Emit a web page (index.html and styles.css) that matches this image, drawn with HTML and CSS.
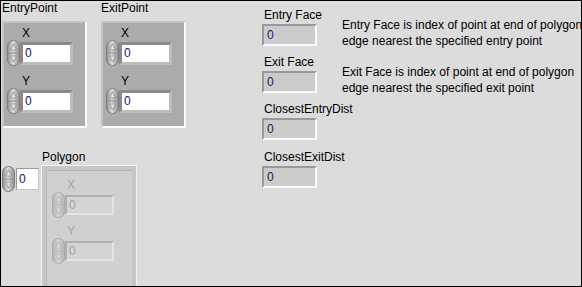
FILE: index.html
```html
<!DOCTYPE html>
<html>
<head>
<meta charset="utf-8">
<link rel="stylesheet" href="styles.css">
</head>
<body>
<svg width="0" height="0" class="defs">
  <defs>
    <linearGradient id="sg" x1="0" y1="0" x2="1" y2="0">
      <stop offset="0" stop-color="#8c8c8c"/>
      <stop offset="0.45" stop-color="#dedede"/>
      <stop offset="1" stop-color="#8c8c8c"/>
    </linearGradient>
    <symbol id="spin" viewBox="0 0 13 26">
      <rect x="0.5" y="0.5" width="12" height="25" rx="6" fill="url(#sg)" stroke="#7c7c7c"/>
      <line x1="2" y1="13" x2="11" y2="13" stroke="#8a8a8a"/>
      <path d="M6.5 4 L9.5 10 L3.5 10 Z" fill="#e4e4e4" stroke="#8c8c8c" stroke-width="0.8"/>
      <path d="M6.5 22 L9.5 16 L3.5 16 Z" fill="#e4e4e4" stroke="#8c8c8c" stroke-width="0.8"/>
    </symbol>
  </defs>
</svg>
<div class="panel">
  <div class="left">
    <div class="clusters">
      <div class="cluster">
        <div class="lbl">EntryPoint</div>
        <div class="cbox">
          <div class="sub">X</div>
          <div class="num"><svg class="spin"><use href="#spin"/></svg><div class="inp">0</div></div>
          <div class="sub sub2">Y</div>
          <div class="num"><svg class="spin"><use href="#spin"/></svg><div class="inp">0</div></div>
        </div>
      </div>
      <div class="cluster">
        <div class="lbl">ExitPoint</div>
        <div class="cbox">
          <div class="sub">X</div>
          <div class="num"><svg class="spin"><use href="#spin"/></svg><div class="inp">0</div></div>
          <div class="sub sub2">Y</div>
          <div class="num"><svg class="spin"><use href="#spin"/></svg><div class="inp">0</div></div>
        </div>
      </div>
    </div>
    <div class="array">
      <div class="index"><svg class="spin"><use href="#spin"/></svg><div class="idx">0</div></div>
      <div class="arrcol">
        <div class="lbl">Polygon</div>
        <div class="frame">
          <div class="dis">
            <div class="sub">X</div>
            <div class="num"><svg class="spin"><use href="#spin"/></svg><div class="inp">0</div></div>
            <div class="sub sub2">Y</div>
            <div class="num"><svg class="spin"><use href="#spin"/></svg><div class="inp">0</div></div>
          </div>
        </div>
      </div>
    </div>
  </div>
  <div class="right">
    <div class="row">
      <div class="ind"><div class="lbl">Entry Face</div><div class="ibox">0</div></div>
      <div class="desc">Entry Face is index of point at end of polygon<br>edge nearest the specified entry point</div>
    </div>
    <div class="row">
      <div class="ind"><div class="lbl">Exit Face</div><div class="ibox">0</div></div>
      <div class="desc">Exit Face is index of point at end of polygon<br>edge nearest the specified exit point</div>
    </div>
    <div class="row">
      <div class="ind"><div class="lbl">ClosestEntryDist</div><div class="ibox">0</div></div>
    </div>
    <div class="row">
      <div class="ind"><div class="lbl">ClosestExitDist</div><div class="ibox">0</div></div>
    </div>
  </div>
</div>
</body>
</html>
```
FILE: styles.css
```css
html, body { margin: 0; padding: 0; }
body { font-family: "Liberation Sans", Arial, sans-serif; font-size: 12px; color: #000; }
.defs { position: absolute; }
.panel {
  width: 582px; height: 287px; box-sizing: border-box;
  border: 1px solid #000; background: #dcdcdc;
  display: flex; overflow: hidden; padding-left: 1px;
}
.left { width: 259px; flex: none; display: flex; flex-direction: column; }
.lbl { line-height: 14px; height: 14px; white-space: nowrap; }
.clusters { display: flex; gap: 14px; }
.cluster { display: flex; flex-direction: column; }
.cbox {
  margin-top: 6px; width: 78px; height: 100px;
  background: #ababab;
  border-top: 2px solid #c4c4c4; border-left: 2px solid #c4c4c4;
  border-right: 2px solid #fbfbfb; border-bottom: 2px solid #fbfbfb;
  padding: 3px 0 0 3px; box-sizing: content-box;
}
.sub { line-height: 14px; height: 14px; padding-left: 15px; color: #000; }
.sub2 { margin-top: 8px; }
.num { display: flex; align-items: center; height: 26px; }
.spin { width: 13px; height: 26px; flex: none; }
.inp {
  width: 45px; height: 17px; box-sizing: content-box;
  border-top: 3px solid #8a8a8a; border-left: 3px solid #8a8a8a;
  border-right: 3px solid #bdbdbd; border-bottom: 3px solid #bdbdbd;
  background: #fff; color: #10206a; line-height: 17px; padding-left: 2px;
}
.array { display: flex; margin-top: 22px; }
.index { display: flex; align-items: center; margin-top: 16px; height: 26px; width: 40px; }
.idx {
  width: 19px; height: 20px; background: #fff; border: 1px solid #c8c8c8;
  border-top-color: #9a9a9a; border-left-color: #9a9a9a;
  line-height: 20px; padding-left: 2px; color: #10206a; margin-left: 1px;
}
.arrcol { display: flex; flex-direction: column; }
.frame {
  margin-top: 2px; width: 80px; height: 130px;
  border: 4px solid #c6c6c6; outline: 1px solid #f2f2f2;
  background: #d0d0d0; padding: 8px 0 0 6px; box-sizing: content-box;
  box-shadow: inset 1px 1px 0 #b4b4b4;
}
.dis { color: #a4a4a4; }
.dis .sub { color: #a4a4a4; padding-left: 15px; }
.dis .spin { opacity: 0.45; }
.dis .inp {
  width: 43px; height: 16px; background: #d4d4d4; color: #a0a0a0;
  border-top: 2px solid #b0b0b0; border-left: 2px solid #b0b0b0;
  border-right: 2px solid #e4e4e4; border-bottom: 2px solid #e4e4e4;
  line-height: 16px;
}
.dis .sub2 { margin-top: 6px; }
.right { display: flex; flex-direction: column; padding-top: 7px; margin-left: 1px; }
.row { display: flex; height: 38px; margin-bottom: 9px; }
.row:nth-child(3) { margin-bottom: 10px; }
.ind { width: 80px; flex: none; display: flex; flex-direction: column; }
.ind .lbl { padding-left: 2px; }
.ibox {
  margin-top: 2px; width: 48px; height: 18px; box-sizing: content-box;
  background: #cbcbcb; color: #10206a;
  border-top: 2px solid #999; border-left: 2px solid #999;
  border-right: 2px solid #fafafa; border-bottom: 2px solid #fafafa;
  line-height: 18px; padding-left: 3px;
}
.desc { margin-top: 9px; line-height: 16px; white-space: nowrap; }
```
